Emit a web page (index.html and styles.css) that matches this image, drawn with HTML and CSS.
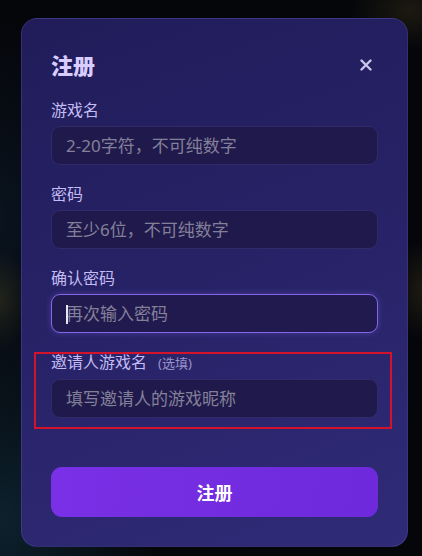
FILE: index.html
```html
<!DOCTYPE html>
<html lang="zh-CN">
<head>
<meta charset="utf-8">
<title>注册</title>
<link rel="stylesheet" href="styles.css">
</head>
<body>
<div class="modal">
  <div class="modal-head">
    <h2 class="modal-title">注册</h2>
    <svg class="close" width="12" height="12" viewBox="0 0 12 12" aria-label="关闭">
      <path d="M1.5 1.5 L10.5 10.5 M10.5 1.5 L1.5 10.5" stroke="#c9c5ea" stroke-width="2.4" stroke-linecap="round" fill="none"/>
    </svg>
  </div>
  <div class="field">
    <label class="label">游戏名</label>
    <input class="input" type="text" placeholder="2-20字符，不可纯数字">
  </div>
  <div class="field">
    <label class="label">密码</label>
    <input class="input" type="password" placeholder="至少6位，不可纯数字">
  </div>
  <div class="field">
    <label class="label">确认密码</label>
    <div class="input-wrap">
      <input class="input focused" type="password" placeholder="再次输入密码">
      <span class="caret"></span>
    </div>
  </div>
  <div class="field highlighted">
    <label class="label">邀请人游戏名<span class="optional">(选填)</span></label>
    <input class="input" type="text" placeholder="填写邀请人的游戏昵称">
  </div>
  <button class="submit" type="button">注册</button>
</div>
</body>
</html>
```
FILE: styles.css
```css
* { box-sizing: border-box; }
html, body { margin: 0; height: 100%; }
body {
  width: 422px;
  height: 556px;
  overflow: hidden;
  font-family: "Noto Sans", "Noto Sans CJK SC", sans-serif;
  background:
    radial-gradient(ellipse 30px 50px at 0px 300px, rgba(110, 98, 40, 0.25), transparent),
    radial-gradient(ellipse 30px 50px at 422px 290px, rgba(110, 98, 40, 0.22), transparent),
    radial-gradient(ellipse 160px 200px at 0px 520px, rgba(20, 60, 80, 0.5), transparent),
    radial-gradient(ellipse 80px 200px at 0px 220px, rgba(15, 35, 55, 0.45), transparent),
    radial-gradient(ellipse 60px 40px at 410px 10px, rgba(80, 70, 30, 0.3), transparent),
    #05060a;
  padding-top: 18px;
  padding-left: 21px;
}
.modal {
  width: 387px;
  border-radius: 16px;
  padding: 31px 29px 29px;
  background: linear-gradient(160deg, #211c59 0%, #272266 45%, #2f2b77 100%);
  border: 1px solid rgba(120, 110, 200, 0.22);
}
.modal-head {
  height: 30px;
  display: flex;
  align-items: center;
  justify-content: space-between;
  margin-bottom: 20px;
}
.modal-title {
  margin: 0;
  font-size: 22px;
  line-height: 30px;
  font-weight: 800;
  color: #d9ccff;
}
.close { margin-right: 6px; display: block; }
.field {
  margin-bottom: 19px;
  position: relative;
}
.label {
  display: block;
  font-size: 16px;
  line-height: 20px;
  color: #c3bcf4;
  margin-bottom: 6px;
}
.optional {
  font-size: 13px;
  color: #9a94c8;
  margin-left: 11px;
}
.input-wrap { position: relative; }
.input {
  display: block;
  width: 100%;
  height: 39px;
  border-radius: 9px;
  border: 1px solid rgba(70, 62, 140, 0.45);
  background: #1f1a4b;
  padding: 0 14px;
  font-family: inherit;
  font-size: 17px;
  color: #e6e2ff;
  outline: none;
}
.input::placeholder { color: #85809a; }
.input.focused {
  border: 1.5px solid #8466ea;
  box-shadow: 0 0 6px rgba(132, 102, 234, 0.35);
  background: #201a4e;
}
.caret {
  position: absolute;
  left: 15px;
  top: 11px;
  width: 2px;
  height: 19px;
  background: #e8e6f6;
}
.highlighted { margin-bottom: 49px; }
.highlighted::after {
  content: "";
  position: absolute;
  top: 0;
  left: -17px;
  right: -14px;
  bottom: -11px;
  border: 2px solid #d3122c;
  pointer-events: none;
}
.submit {
  display: block;
  width: 100%;
  height: 50px;
  border: none;
  border-radius: 11px;
  background: linear-gradient(100deg, #7a30e6 0%, #6d29db 100%);
  color: #ffffff;
  font-family: inherit;
  font-size: 18px;
  font-weight: 700;
}
```
